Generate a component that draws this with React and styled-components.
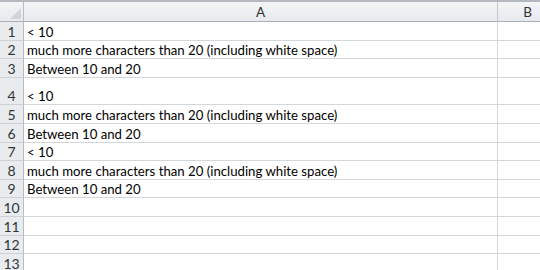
import React from "react";
import styled, { createGlobalStyle } from "styled-components";

const Global = createGlobalStyle`
  html, body { margin: 0; padding: 0; background: #fff; }
  body { font-family: Lato, "Open Sans", sans-serif; overflow: hidden; }
`;

const Sheet = styled.div`
  width: 540px;
  height: 270px;
  overflow: hidden;
  border-top: 2px solid #b4b9bf;
  box-sizing: border-box;
`;

const Grid = styled.div`
  display: grid;
  grid-template-columns: 24px 474px 60px;
  grid-template-rows: 20px;
  grid-auto-rows: auto;
  width: 558px;
`;

const Corner = styled.div`
  position: relative;
  height: 20px;
  background: linear-gradient(#f4f5f7, #e6e9ed);
  border-right: 1px solid #b7bcc2;
  border-bottom: 1px solid #a9afb6;
  box-sizing: border-box;
  &::after {
    content: "";
    position: absolute;
    right: 2px;
    bottom: 2px;
    width: 0;
    height: 0;
    border-left: 11px solid transparent;
    border-bottom: 11px solid #d0d4d9;
  }
`;

const ColHead = styled.div`
  height: 20px;
  background: linear-gradient(#f4f5f7, #e6e9ed);
  border-right: 1px solid #c4c8cd;
  border-bottom: 1px solid #a9afb6;
  box-sizing: border-box;
  display: flex;
  align-items: center;
  justify-content: center;
  font-family: Lato, sans-serif;
  font-size: 13.5px;
  color: #2e3438;
  padding-top: 1px;
`;

const RowHead = styled.div`
  height: ${(p) => p.$h}px;
  background: #e9ecef;
  border-right: 1px solid #b7bcc2;
  border-bottom: 1px solid #cdd1d5;
  box-sizing: border-box;
  display: flex;
  align-items: flex-end;
  justify-content: center;
  font-family: Lato, sans-serif;
  font-size: 14px;
  line-height: 16px;
  color: #2f3437;
`;

const Cell = styled.div`
  height: ${(p) => p.$h}px;
  border-right: 1px solid #d4d7da;
  border-bottom: 1px solid #d4d7da;
  box-sizing: border-box;
  display: flex;
  align-items: flex-end;
  padding: 0 0 0 3px;
  font-size: 13.2px;
  line-height: 16px;
  color: #000;
  white-space: nowrap;
`;

const heights = [19, 18, 19, 27, 19, 19, 18, 19, 18, 19, 19, 18, 19];
const texts = [
  "< 10",
  "much more characters than 20 (including white space)",
  "Between 10 and 20",
  "< 10",
  "much more characters than 20 (including white space)",
  "Between 10 and 20",
  "< 10",
  "much more characters than 20 (including white space)",
  "Between 10 and 20",
  "",
  "",
  "",
  "",
];

export default function App() {
  return (
    <>
      <Global />
      <Sheet>
        <Grid>
          <Corner />
          <ColHead>A</ColHead>
          <ColHead>B</ColHead>
          {heights.map((h, i) => (
            <React.Fragment key={i}>
              <RowHead $h={h}>{i + 1}</RowHead>
              <Cell $h={h}>{texts[i]}</Cell>
              <Cell $h={h} />
            </React.Fragment>
          ))}
        </Grid>
      </Sheet>
    </>
  );
}
